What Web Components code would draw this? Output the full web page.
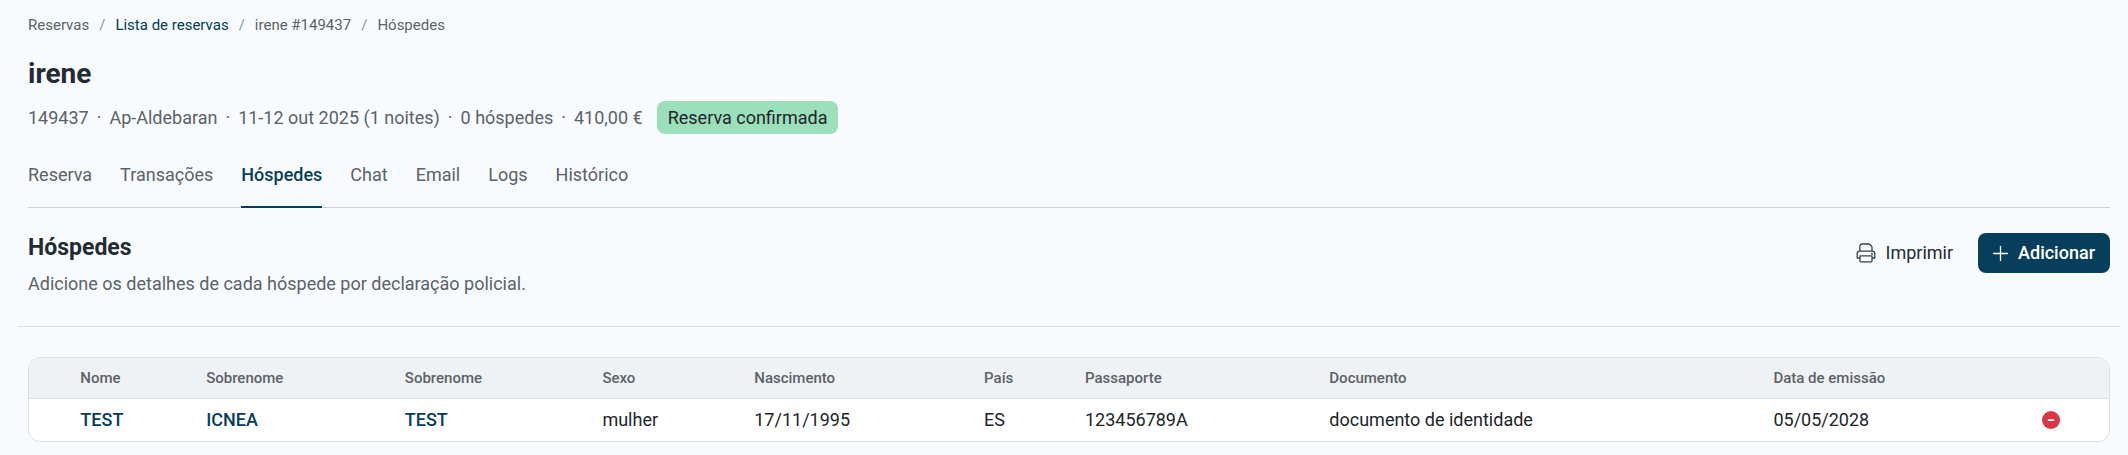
<!DOCTYPE html>
<html lang="pt">
<head>
<meta charset="utf-8">
<meta name="viewport" content="width=device-width, initial-scale=1">
<title>Hóspedes</title>
<style>
  body {
    margin: 0;
    background: #f7fbfe;
    color: #252b31;
    font-family: Roboto, "Liberation Sans", sans-serif;
    font-size: 18px;
    line-height: 24px;
    --navy: #073e5b;
    --muted: #5c6268;
    --line: #dcdfe3;
    --danger: #dc3545;
  }
</style>
</head>
<body>
<booking-page></booking-page>

<script>
const define = (name, html) => {
  const template = document.createElement('template');
  template.innerHTML = html;
  customElements.define(name, class extends HTMLElement {
    constructor() {
      super();
      this.attachShadow({ mode: 'open' }).append(template.content.cloneNode(true));
    }
  });
};

define('bread-crumbs', `
  <style>
    :host { display: block; font-size: 15px; line-height: 20px; color: var(--muted); }
    nav { display: flex; flex-wrap: wrap; gap: 10px; }
    i { font-style: normal; color: #8e9399; }
    a { color: #003b57; text-decoration: none; }
  </style>
  <nav aria-label="Navegação">
    <span>Reservas</span><i>/</i><a href="#lista">Lista de reservas</a><i>/</i><span>irene #149437</span><i>/</i><span>Hóspedes</span>
  </nav>`);

define('status-badge', `
  <style>
    :host { display: block; padding: 4px 11px; border-radius: 8px; background: #9cdfbb; color: #212529; line-height: 25px; }
  </style>
  <slot></slot>`);

define('booking-summary', `
  <style>
    :host { display: block; }
    h1 { margin: 0; font-size: 28px; line-height: 36px; font-weight: 700; }
    .meta { display: flex; flex-wrap: wrap; align-items: center; gap: 8px; margin-top: 9px; color: var(--muted); }
    status-badge { margin-left: 6px; }
  </style>
  <h1><slot name="name"></slot></h1>
  <div class="meta">
    <span>149437</span><span>·</span><span>Ap-Aldebaran</span><span>·</span><span>11-12 out 2025 (1 noites)</span><span>·</span><span>0 hóspedes</span><span>·</span><span>410,00 €</span>
    <status-badge>Reserva confirmada</status-badge>
  </div>`);

define('tab-link', `
  <style>
    :host { display: block; margin-bottom: -1px; }
    a { display: block; padding-bottom: 19px; border-bottom: 2px solid transparent; color: var(--muted); text-decoration: none; }
    :host([current]) a { color: var(--navy); border-color: var(--navy); font-weight: 500; }
  </style>
  <a href="#"><slot></slot></a>`);

define('tab-bar', `
  <style>
    :host { display: block; border-bottom: 1px solid #ccd2d7; }
    nav { display: flex; gap: 28px; }
  </style>
  <nav aria-label="Secções"><slot></slot></nav>`);

define('action-button', `
  <style>
    :host { display: block; }
    button { display: flex; align-items: center; gap: 10px; height: 40px; margin: 0; padding: 0 15px; border: 0; border-radius: 8px; background: transparent; color: inherit; font: inherit; cursor: pointer; }
    :host([primary]) button { background: var(--navy); color: #fff; font-weight: 500; }
  </style>
  <button type="button"><slot name="icon"></slot><slot></slot></button>`);

define('section-header', `
  <style>
    :host { display: flex; justify-content: space-between; align-items: flex-start; }
    h2 { margin: 0; font-size: 23px; line-height: 30px; font-weight: 700; }
    p { margin: 9px 0 0; color: var(--muted); }
    .actions { display: flex; gap: 10px; }
    svg { display: block; }
  </style>
  <div>
    <h2>Hóspedes</h2>
    <p>Adicione os detalhes de cada hóspede por declaração policial.</p>
  </div>
  <div class="actions">
    <action-button>
      <svg slot="icon" width="20" height="20" viewBox="0 0 20 20" fill="none" stroke="#3b4147" stroke-width="1.3" stroke-linejoin="round" stroke-linecap="round" aria-hidden="true">
        <path d="M3.800 8V3.400A2.400 2.400 0 0 1 6.200 1h6.600a2 2 0 0 1 1.400.6l1.200 1.400a2 2 0 0 1 .6 1.400V8M4 15H1.200V10.600A2.500 2.500 0 0 1 3.700 8.200h12.600a2.500 2.500 0 0 1 2.500 2.400V15H16M4 12.800h12V18a.8.8 0 0 1-.8.8H4.800A.8.8 0 0 1 4 18z"/>
        <circle cx="16" cy="10.700" r=".4"/>
      </svg>Imprimir
    </action-button>
    <action-button primary>
      <svg slot="icon" width="15" height="15" viewBox="0 0 15 15" stroke="#fff" stroke-width="1.300" stroke-linecap="round" aria-hidden="true"><path d="M7.500.6v13.800M.6 7.500h13.800"/></svg>Adicionar
    </action-button>
  </div>`);

define('guest-table', `
  <style>
    :host { display: block; border: 1px solid var(--line); border-radius: 12px; overflow: hidden; background: #fff; }
    table { width: 100%; border-collapse: separate; border-spacing: 0; table-layout: fixed; }
    th, td { box-sizing: border-box; padding: 0 0 0 16px; text-align: left; white-space: nowrap; }
    th { height: 41px; background: #eff2f5; border-bottom: 1px solid var(--line); color: var(--muted); font-size: 15px; line-height: 20px; font-weight: 500; }
    td { height: 42px; color: #212529; }
    a { color: var(--navy); font-weight: 500; text-decoration: none; }
    td.remove { padding: 0; }
    button { display: block; margin: 0 auto; padding: 0; border: 0; background: none; cursor: pointer; }
    svg { display: block; }
    circle { fill: var(--danger); }
  </style>
  <table>
    <colgroup>
      <col style="width:1.7%"><col style="width:6.05%"><col style="width:9.55%"><col style="width:9.5%"><col style="width:7.3%"><col style="width:11.05%"><col style="width:4.85%"><col style="width:11.75%"><col style="width:21.35%"><col style="width:11.3%"><col style="width:5.6%">
    </colgroup>
    <thead>
      <tr><th></th><th>Nome</th><th>Sobrenome</th><th>Sobrenome</th><th>Sexo</th><th>Nascimento</th><th>País</th><th>Passaporte</th><th>Documento</th><th>Data de emissão</th><th></th></tr>
    </thead>
    <tbody>
      <tr>
        <td></td><td><a href="#">TEST</a></td><td><a href="#">ICNEA</a></td><td><a href="#">TEST</a></td><td>mulher</td><td>17/11/1995</td><td>ES</td><td>123456789A</td><td>documento de identidade</td><td>05/05/2028</td>
        <td class="remove"><button type="button" aria-label="Remover"><svg width="18" height="18" viewBox="0 0 18 18" aria-hidden="true"><circle cx="9" cy="9" r="9"/><rect x="5.600" y="8.200" width="6.800" height="1.700" rx=".8" fill="#fff"/></svg></button></td>
      </tr>
    </tbody>
  </table>`);

define('booking-page', `
  <style>
    :host { display: block; padding: 15px 18px 13px 28px; }
    booking-summary { margin-top: 21px; }
    tab-bar { margin-top: 29px; }
    section-header { margin-top: 25px; }
    hr { margin: 30px -10px; height: 1px; border: 0; background: var(--line); }
  </style>
  <bread-crumbs></bread-crumbs>
  <main>
    <booking-summary><span slot="name">irene</span></booking-summary>
    <tab-bar>
      <tab-link>Reserva</tab-link><tab-link>Transações</tab-link><tab-link current>Hóspedes</tab-link><tab-link>Chat</tab-link><tab-link>Email</tab-link><tab-link>Logs</tab-link><tab-link>Histórico</tab-link>
    </tab-bar>
    <section-header></section-header>
    <hr>
    <guest-table></guest-table>
  </main>`);
</script>
</body>
</html>
